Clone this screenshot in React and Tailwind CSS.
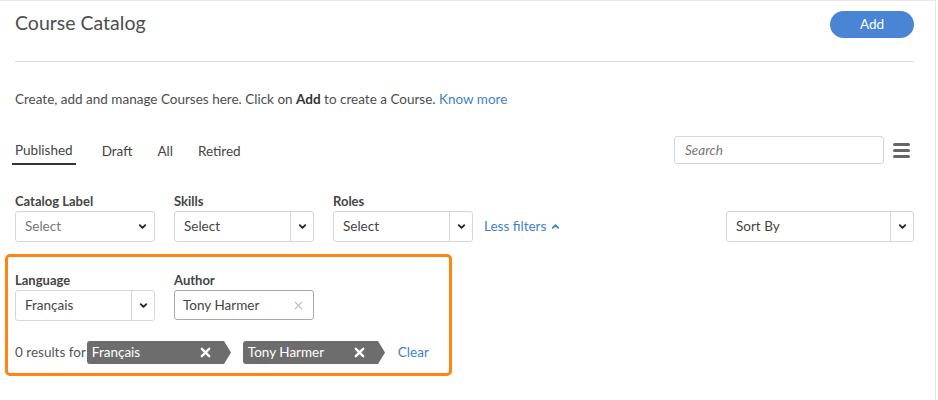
import React from 'react';

const Chevron = ({ up = false, className = '' }) => (
  <svg viewBox="0 0 12 12" className={className} fill="none" stroke="currentColor" strokeWidth="2" strokeLinecap="round" strokeLinejoin="round">
    {up ? <path d="M3 7.5 6 4.5 9 7.5" /> : <path d="M3 4.5 6 7.5 9 4.5" />}
  </svg>
);

const SelectBox = ({ value, width = 'w-[140px]', split = true, placeholder = false }) => (
  <div className={`${width} h-[31px] flex items-stretch border border-[#d6d6d6] rounded-[3px] bg-white`}>
    <div className={`flex-1 flex items-center pl-[9px] text-[13.5px] ${placeholder ? 'text-[#777]' : 'text-[#444]'}`}>{value}</div>
    <div className={`w-[23px] flex items-center justify-center text-[#222] ${split ? 'border-l border-[#d6d6d6]' : ''}`}>
      <Chevron className="w-[11px] h-[11px]" />
    </div>
  </div>
);

const Tag = ({ label, width }) => (
  <div className={`relative ${width} h-[23px] flex items-center`}>
    <div className="flex-1 h-full bg-[#6d6d6d] rounded-l-[3px] flex items-center justify-between pl-[5px] pr-[12px] text-white text-[13.5px]">
      <span>{label}</span>
      <svg viewBox="0 0 12 12" className="w-[11px] h-[11px]" stroke="white" strokeWidth="2.6" strokeLinecap="round">
        <path d="M2 2 10 10M10 2 2 10" />
      </svg>
    </div>
    <svg viewBox="0 0 8 23" className="w-[8px] h-[23px]" fill="#6d6d6d">
      <path d="M0 0 H1 L8 11.5 L1 23 H0 Z" />
    </svg>
  </div>
);

const Label = ({ children }) => (
  <div className="text-[13px] font-bold text-[#444] leading-[16px] mb-[2px]">{children}</div>
);

export default function App() {
  return (
    <div className="w-[938px] h-[400px] bg-white overflow-hidden" style={{ fontFamily: 'Lato, "Open Sans", sans-serif' }}>
      <div className="w-[936px] h-[400px] border-t border-r border-[#e8e8e8] pl-[15px] pr-[21px]">
        {/* header */}
        <div className="flex items-center justify-between pt-[9px] h-[37px]">
          <h1 className="text-[19.5px] text-[#4d4d4d] leading-none -mt-[2px]">Course Catalog</h1>
          <button className="w-[84px] h-[27px] rounded-full bg-[#4a84d4] text-white text-[13.5px]">Add</button>
        </div>
        <div className="mt-[23px] border-t border-[#dcdcdc]" />

        <p className="mt-[29px] text-[13.5px] text-[#4d4d4d] leading-[16px]">
          Create, add and manage Courses here. Click on <b className="text-[#333]">Add</b> to create a Course.{' '}
          <span className="text-[#3f7fd0]">Know more</span>
        </p>

        {/* tabs + search */}
        <div className="mt-[29px] flex items-center justify-between h-[28px]">
          <div className="flex items-center gap-[26px] text-[13.5px] text-[#444] pt-[2px]">
            <div className="relative pb-[2px] px-[3px] -ml-[3px]">
              Published
              <div className="absolute left-0 right-0 -bottom-[3px] h-[2px] bg-[#333]" />
            </div>
            <span>Draft</span>
            <span className="-ml-[1px]">All</span>
            <span className="-ml-[1px]">Retired</span>
          </div>
          <div className="flex items-center">
            <div className="w-[210px] h-[28px] border border-[#d6d6d6] rounded-[3px] flex items-center pl-[10px] text-[13.5px] italic text-[#777]">Search</div>
            <div className="ml-[9px] mr-[4px] w-[17px] flex flex-col gap-[3px]">
              <div className="h-[3px] bg-[#666] rounded-full" />
              <div className="h-[3px] bg-[#666] rounded-full" />
              <div className="h-[3px] bg-[#666] rounded-full" />
            </div>
          </div>
        </div>

        {/* filters */}
        <div className="mt-[29px] flex items-end justify-between">
          <div className="flex items-end gap-[19px]">
            <div>
              <Label>Catalog Label</Label>
              <SelectBox value="Select" split={false} placeholder />
            </div>
            <div>
              <Label>Skills</Label>
              <SelectBox value="Select" />
            </div>
            <div>
              <Label>Roles</Label>
              <SelectBox value="Select" />
            </div>
            <div className="h-[31px] flex items-center -ml-[8px] text-[13.5px] text-[#3f7fd0] gap-[4px]">
              Less filters <Chevron up className="w-[11px] h-[11px]" />
            </div>
          </div>
          <SelectBox value="Sort By" width="w-[188px]" />
        </div>

        {/* active filters */}
        <div className="mt-[12px] -ml-[10px] w-[447px] h-[122px] border-[3px] border-[#ff8412] rounded-[5px] pl-[7px] pt-[15px]">
          <div className="flex gap-[19px]">
            <div>
              <Label>Language</Label>
              <SelectBox value="Français" />
            </div>
            <div>
              <Label>Author</Label>
              <div className="w-[140px] h-[30px] border border-[#a8a8a8] rounded-[3px] flex items-center justify-between pl-[8px] pr-[10px] text-[13.5px] text-[#444]">
                <span>Tony Harmer</span>
                <svg viewBox="0 0 10 10" className="w-[9px] h-[9px]" stroke="#bbb" strokeWidth="1.4"><path d="M1 1 9 9M9 1 1 9" /></svg>
              </div>
            </div>
          </div>
          <div className="mt-[20px] flex items-center text-[13.5px]">
            <span className="text-[#555] mr-[1px]">0 results for</span>
            <Tag label="Français" width="w-[144px]" />
            <div className="w-[12px]" />
            <Tag label="Tony Harmer" width="w-[142px]" />
            <span className="ml-[13px] text-[#3f7fd0]">Clear</span>
          </div>
        </div>
      </div>
    </div>
  );
}
